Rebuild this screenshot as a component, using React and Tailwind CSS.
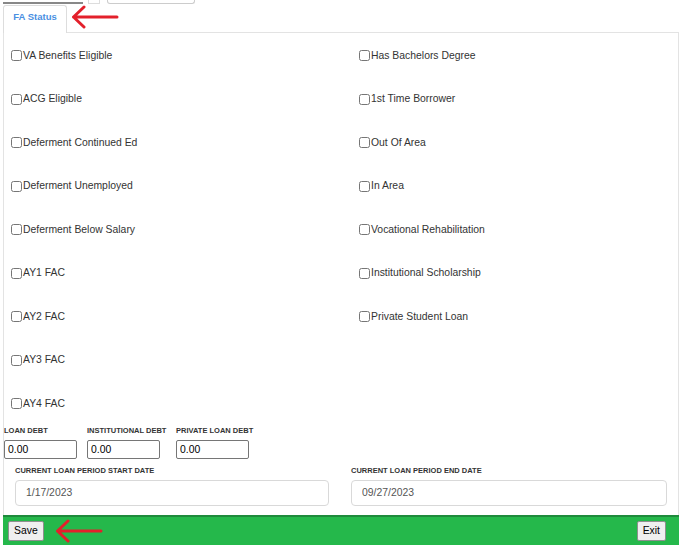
import { useState } from "react";

const leftItems = [
  "VA Benefits Eligible",
  "ACG Eligible",
  "Deferment Continued Ed",
  "Deferment Unemployed",
  "Deferment Below Salary",
  "AY1 FAC",
  "AY2 FAC",
  "AY3 FAC",
  "AY4 FAC",
];

const rightItems = [
  "Has Bachelors Degree",
  "1st Time Borrower",
  "Out Of Area",
  "In Area",
  "Vocational Rehabilitation",
  "Institutional Scholarship",
  "Private Student Loan",
];

// red annotation arrow pointing left
const Arrow = ({ className }) => (
  <svg className={className} width="48" height="24" viewBox="0 0 48 24" fill="none">
    <path
      d="M46 12H2.5M2.5 12L13 2M2.5 12L13 22"
      stroke="#e3202b"
      strokeWidth="3"
      strokeLinecap="round"
      strokeLinejoin="round"
    />
  </svg>
);

function Check({ label }) {
  const [on, setOn] = useState(false);
  return (
    <label className="flex items-center h-[43.5px] text-[10.4px] text-[#333]">
      <input
        type="checkbox"
        checked={on}
        onChange={() => setOn(!on)}
        className="w-[11px] h-[11px] m-0 mr-[1px]"
      />
      <span>{label}</span>
    </label>
  );
}

export default function App() {
  const rows = leftItems.map((l, i) => [l, rightItems[i]]);

  return (
    <div className="w-[688px] h-[559px] bg-white overflow-hidden font-['Liberation_Sans',Arial,sans-serif]">
      {/* cut-off controls above */}
      <div className="flex items-end h-[4px] pl-[3px]">
        <div className="w-[80px] h-[4px] border-b-2 border-[#888]" />
        <div className="w-[12px] h-[4px] ml-[5px] border border-t-0 border-[#ddd]" />
        <div className="w-[88px] h-[4px] ml-[7px] border border-t-0 border-[#ccc] rounded-b-[3px]" />
      </div>

      {/* tab strip */}
      <div className="flex items-end h-[28px] pl-[3px] relative">
        <div className="relative z-10 w-[64px] h-[28px] border border-b-0 border-[#ddd] rounded-t-[3px] bg-white flex items-center justify-center pb-[4px] text-[9.5px] font-bold text-[#4a90e2] -mb-[1px]">
          FA Status
        </div>
        <Arrow className="ml-[4px] mb-[3px]" />
      </div>

      {/* panel */}
      <div className="ml-[3px] w-[676px] border border-[#e3e3e3] border-b-0">
        <div className="pl-[7px] pt-[1px] grid grid-cols-[348px_1fr]">
          {rows.map(([l, r], i) => (
            <div key={i} className="contents">
              <Check label={l} />
              {r ? <Check label={r} /> : <div />}
            </div>
          ))}
        </div>

        {/* debt fields */}
        <div className="flex">
          {[
            ["Loan Debt", "w-[83px]"],
            ["Institutional Debt", "w-[89px]"],
            ["Private Loan Debt", "w-[89px]"],
          ].map(([t, w]) => (
            <div key={t} className={w}>
              <div className="text-[7.5px] font-bold uppercase text-[#333] h-[14px] leading-[10px] whitespace-nowrap">{t}</div>
              <input
                defaultValue="0.00"
                className="block w-[73px] h-[19px] border border-[#767676] rounded-[2px] px-[3px] text-[10.4px] text-black outline-none"
              />
            </div>
          ))}
        </div>

        {/* loan period dates */}
        <div className="grid grid-cols-2 pt-[7px] pb-[9px]">
          {[
            ["Current Loan Period Start Date", "1/17/2023"],
            ["Current Loan Period End Date", "09/27/2023"],
          ].map(([t, v], i) => (
            <div key={t} className={i === 0 ? "pl-[11px] pr-[12px]" : "pl-[10px] pr-[11px]"}>
              <div className="text-[7.5px] font-bold uppercase text-[#333] h-[14px] leading-[10px]">{t}</div>
              <input
                defaultValue={v}
                className="block w-full h-[26px] border border-[#d9d9d9] rounded-[4px] px-[10px] text-[10.4px] text-[#555] outline-none"
              />
            </div>
          ))}
        </div>
      </div>

      {/* footer bar */}
      <div className="ml-[3px] w-[676px] h-[30px] bg-[#25b84b] border-t-2 border-[#1f8a3c] flex items-center justify-between px-[5px]">
        <div className="flex items-center">
          <button className="h-[20px] px-[5px] bg-[#efefef] border border-[#8f8f8f] rounded-[2px] text-[10.4px] text-black">
            Save
          </button>
          <Arrow className="ml-[11px]" />
        </div>
        <button className="h-[20px] px-[5px] mr-[8px] bg-[#efefef] border border-[#8f8f8f] rounded-[2px] text-[10.4px] text-black">
          Exit
        </button>
      </div>
    </div>
  );
}
